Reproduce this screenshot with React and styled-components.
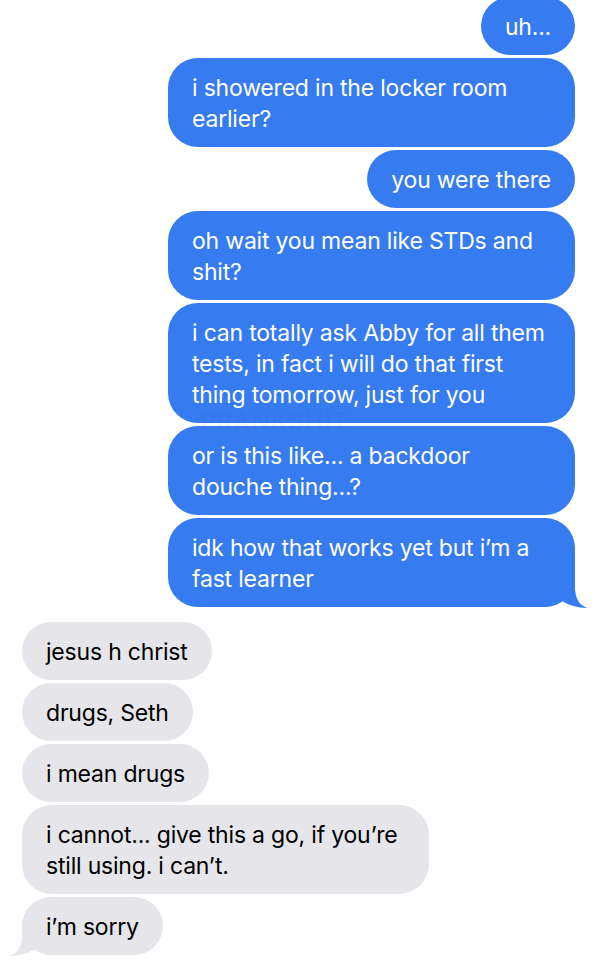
import React from "react";
import styled, { createGlobalStyle } from "styled-components";

const GlobalStyle = createGlobalStyle`
  html, body {
    margin: 0;
    padding: 0;
    background: #ffffff;
  }
  body {
    font-family: Inter, "Noto Sans", "Liberation Sans", sans-serif;
    -webkit-font-smoothing: antialiased;
  }
`;

const Page = styled.div`
  position: relative;
  width: 601px;
  height: 960px;
  overflow: hidden;
  background: #ffffff;
  box-sizing: border-box;
  padding: 0 26px 0 22px;
  display: flex;
  flex-direction: column;
`;

const Group = styled.div`
  display: flex;
  flex-direction: column;
  align-items: ${p => (p.mine ? "flex-end" : "flex-start")};
  gap: 3px;
  margin-top: ${p => p.offset || 0}px;
`;

const Bubble = styled.div`
  position: relative;
  box-sizing: border-box;
  width: ${p => (p.wide ? "407px" : "auto")};
  max-width: 407px;
  padding: 15px 24px 12px 24px;
  border-radius: 30px;
  background: ${p => (p.mine ? "#367bf0" : "#e5e5ea")};
  color: ${p => (p.mine ? "#ffffff" : "#000000")};
  font-size: 23px;
  line-height: 31px;
  letter-spacing: -0.2px;
  white-space: pre-line;
`;

const Text = styled.span`
  position: relative;
`;

const Tail = styled.svg`
  position: absolute;
  bottom: -2px;
  width: 50px;
  height: 42px;
  ${p => (p.mine ? "right: -15px;" : "left: -15px; transform: scaleX(-1);")}
`;

const Watermark = styled.div`
  position: absolute;
  top: 407px;
  left: 200px;
  font-size: 24px;
  font-weight: 600;
  letter-spacing: 1px;
  color: rgba(20, 40, 90, 0.035);
  pointer-events: none;
`;

const sent = [
  { text: "uh..." },
  { text: "i showered in the locker room\nearlier?", wide: true },
  { text: "you were there" },
  { text: "oh wait you mean like STDs and\nshit?", wide: true },
  {
    text:
      "i can totally ask Abby for all them\ntests, in fact i will do that first\nthing tomorrow, just for you",
    wide: true
  },
  { text: "or is this like... a backdoor\ndouche thing...?", wide: true },
  { text: "idk how that works yet but i\u2019m a\nfast learner", wide: true }
];

const received = [
  { text: "jesus h christ" },
  { text: "drugs, Seth" },
  { text: "i mean drugs" },
  {
    text: "i cannot... give this a go, if you\u2019re\nstill using. i can\u2019t.",
    wide: true
  },
  { text: "i\u2019m sorry" }
];

const BubbleTail = ({ mine }) => (
  <Tail mine={mine} viewBox="0 0 50 42">
    <path
      d="M35 5 L35 23 Q36 37 47 41 Q33 41 22 34 L5 25 L5 5 Z"
      fill={mine ? "#367bf0" : "#e5e5ea"}
    />
  </Tail>
);

const Thread = ({ items, mine, offset }) => (
  <Group mine={mine} offset={offset}>
    {items.map((m, i) => (
      <Bubble key={i} mine={mine} wide={m.wide}>
        {i === items.length - 1 && <BubbleTail mine={mine} />}
        <Text>{m.text}</Text>
      </Bubble>
    ))}
  </Group>
);

export default function App() {
  return (
    <>
      <GlobalStyle />
      <Page>
        <Thread items={sent} mine offset={-3} />
        <Thread items={received} offset={15} />
        <Watermark>PRANKSHIT</Watermark>
      </Page>
    </>
  );
}
